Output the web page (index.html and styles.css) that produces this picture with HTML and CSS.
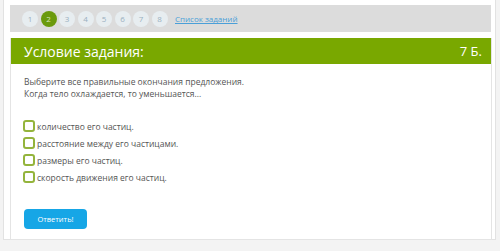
FILE: index.html
```html
<!DOCTYPE html>
<html lang="ru">
<head>
    <meta charset="UTF-8">
    <title>Задание</title>
    <link rel="stylesheet" href="styles.css">
</head>
<body>
    <div class="page">
        <div class="nav">
            <span class="num">1</span>
            <span class="num current">2</span>
            <span class="num">3</span>
            <span class="num">4</span>
            <span class="num">5</span>
            <span class="num">6</span>
            <span class="num">7</span>
            <span class="num">8</span>
            <a class="list-link" href="#">Список заданий</a>
        </div>
        <div class="task">
            <div class="task-head">
                <span>Условие задания:</span>
                <span class="points">7 Б.</span>
            </div>
            <div class="task-body">
                <p class="question">Выберите все правильные окончания предложения.<br>Когда тело охлаждается, то уменьшается...</p>
                <div class="answers">
                    <label class="answer"><span class="box"></span>количество его частиц.</label>
                    <label class="answer"><span class="box"></span>расстояние между его частицами.</label>
                    <label class="answer"><span class="box"></span>размеры его частиц.</label>
                    <label class="answer"><span class="box"></span>скорость движения его частиц.</label>
                </div>
                <button class="submit">Ответить!</button>
            </div>
        </div>
    </div>
</body>
</html>
```
FILE: styles.css
```css
body {
    margin: 0;
    background-color: #f3f3f3;
    font-family: "Open Sans", sans-serif;
    color: #555;
}
.page {
    margin-left: 3px;
    width: 493px;
    height: 240px;
    background-color: #fff;
    border-left: 1px solid #e2e2e2;
    border-right: 1px solid #e2e2e2;
    border-bottom: 1px solid #e2e2e2;
    padding: 5px 0 0 6px;
    box-sizing: border-box;
}
.nav {
    width: 481px;
    height: 27px;
    background-color: #dcdcdc;
    display: flex;
    align-items: center;
    padding-left: 12px;
    box-sizing: border-box;
    gap: 2.5px;
}
.num {
    width: 16px;
    height: 16px;
    border-radius: 50%;
    background-color: #e7edf0;
    color: #9ab0c0;
    font-size: 8px;
    display: flex;
    align-items: center;
    justify-content: center;
}
.num.current {
    background-color: #6b9a0c;
    color: #d8e6b8;
}
.list-link {
    margin-left: 5px;
    color: #4a9fd8;
    font-size: 8px;
}
.task {
    margin-top: 6px;
    width: 482px;
    border: 1px solid #e4e4e4;
    border-top: none;
    height: 202px;
    box-sizing: border-box;
}
.task-head {
    height: 26px;
    background-color: #79a800;
    color: #fff;
    display: flex;
    align-items: center;
    justify-content: space-between;
    padding: 0 9px 0 13px;
    font-size: 14px;
}
.task-head .points {
    font-size: 13px;
}
.task-body {
    padding: 12px 13px;
}
.question {
    margin: 0;
    font-size: 8.5px;
    line-height: 12px;
}
.answers {
    margin-top: 20px;
    display: flex;
    flex-direction: column;
    gap: 5px;
}
.answer {
    display: flex;
    align-items: center;
    font-size: 8.5px;
    height: 12px;
}
.box {
    width: 8px;
    height: 8px;
    border: 2px solid #94b43c;
    border-radius: 3px;
    margin: 0 2px 0 -1px;
}
.submit {
    margin-top: 26px;
    background-color: #16a6e6;
    color: #fff;
    border: none;
    border-radius: 4px;
    width: 63px;
    height: 20px;
    font-family: "Open Sans", sans-serif;
    font-size: 7.5px;
    padding: 0;
}
```
